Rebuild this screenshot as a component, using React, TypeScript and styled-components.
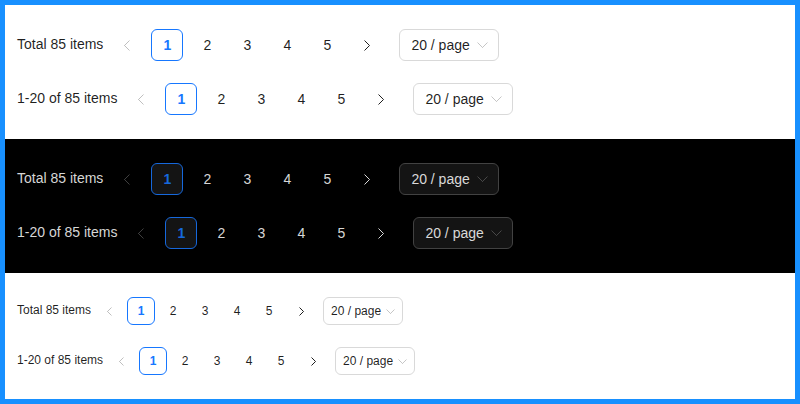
import React from "react";
import styled, { createGlobalStyle, css } from "styled-components";

type Size = "default" | "small";

const GlobalStyle = createGlobalStyle`
  html, body {
    margin: 0;
    padding: 0;
    background: #fff;
  }
  * {
    box-sizing: border-box;
  }
`;

const Frame = styled.div`
  width: 800px;
  height: 404px;
  border: 5px solid #1890ff;
  display: flex;
  flex-direction: column;
  font-family: "Liberation Sans", Arial, sans-serif;
`;

const Section = styled.div<{ $dark?: boolean; $size: Size }>`
  display: flex;
  flex-direction: column;
  gap: 22px;
  padding: 24px 12px;
  background: ${(p) => (p.$dark ? "#000" : "#fff")};
  color: ${(p) => (p.$dark ? "rgba(255,255,255,0.85)" : "rgba(0,0,0,0.88)")};
  font-size: ${(p) => (p.$size === "small" ? "12px" : "14px")};
  --item: ${(p) => (p.$size === "small" ? "28px" : "32px")};
  --gap: ${(p) => (p.$size === "small" ? "4px" : "8px")};
  --muted: ${(p) => (p.$dark ? "rgba(255,255,255,0.25)" : "rgba(0,0,0,0.25)")};
  --field: ${(p) => (p.$dark ? "#141414" : "#fff")};
  --line: ${(p) => (p.$dark ? "#424242" : "#d9d9d9")};
  --primary: ${(p) => (p.$dark ? "#1668dc" : "#1677ff")};
`;

const Row = styled.ul`
  display: flex;
  align-items: center;
  list-style: none;
  margin: 0;
  padding: 0;
  height: var(--item);
`;

const Total = styled.li`
  margin-right: var(--gap);
  padding-bottom: 2px;
  white-space: nowrap;
`;

const Item = styled.li<{ $active?: boolean }>`
  width: var(--item);
  height: var(--item);
  margin-right: var(--gap);
  display: flex;
  align-items: center;
  justify-content: center;
  border-radius: 6px;
  border: 1px solid transparent;
  ${(p) =>
    p.$active &&
    css`
      border-color: var(--primary);
      background: var(--field);
      color: var(--primary);
      font-weight: 600;
    `}
`;

const Arrow = styled.li<{ $disabled?: boolean }>`
  width: var(--item);
  height: var(--item);
  margin-right: var(--gap);
  display: flex;
  align-items: center;
  justify-content: center;
  color: ${(p) => (p.$disabled ? "var(--muted)" : "inherit")};
`;

const Select = styled.li<{ $size: Size }>`
  margin-left: var(--gap);
  height: var(--item);
  width: ${(p) => (p.$size === "small" ? "80px" : "100px")};
  padding: 0 ${(p) => (p.$size === "small" ? "7px" : "10px")} 0
    ${(p) => (p.$size === "small" ? "7px" : "11px")};
  border: 1px solid var(--line);
  border-radius: 6px;
  background: var(--field);
  display: flex;
  align-items: center;
  justify-content: space-between;
  white-space: nowrap;

  svg {
    color: var(--muted);
  }
`;

const Chevron = ({ dir, size }: { dir: "left" | "right"; size: Size }) => {
  const h = size === "small" ? 9 : 11;
  const w = size === "small" ? 5 : 6;
  const pts =
    dir === "left"
      ? `${w - 0.5},0.5 0.5,${h / 2} ${w - 0.5},${h - 0.5}`
      : `0.5,0.5 ${w - 0.5},${h / 2} 0.5,${h - 0.5}`;
  return (
    <svg width={w} height={h} viewBox={`0 0 ${w} ${h}`}>
      <polyline points={pts} fill="none" stroke="currentColor" strokeWidth="1" />
    </svg>
  );
};

const Down = ({ size }: { size: Size }) => {
  const w = size === "small" ? 9 : 11;
  const h = size === "small" ? 5 : 6;
  return (
    <svg width={w} height={h} viewBox={`0 0 ${w} ${h}`}>
      <polyline
        points={`0.5,0.5 ${w / 2},${h - 0.5} ${w - 0.5},0.5`}
        fill="none"
        stroke="currentColor"
        strokeWidth="0.9"
      />
    </svg>
  );
};

const Pager = ({ total, size }: { total: string; size: Size }) => (
  <Row>
    <Total>{total}</Total>
    <Arrow $disabled>
      <Chevron dir="left" size={size} />
    </Arrow>
    {[1, 2, 3, 4, 5].map((n) => (
      <Item key={n} $active={n === 1}>
        {n}
      </Item>
    ))}
    <Arrow>
      <Chevron dir="right" size={size} />
    </Arrow>
    <Select $size={size}>
      <span>20 / page</span>
      <Down size={size} />
    </Select>
  </Row>
);

const Block = ({ dark, size }: { dark?: boolean; size: Size }) => (
  <Section $dark={dark} $size={size}>
    <Pager total="Total 85 items" size={size} />
    <Pager total="1-20 of 85 items" size={size} />
  </Section>
);

export default function App() {
  return (
    <>
      <GlobalStyle />
      <Frame>
        <Block size="default" />
        <Block dark size="default" />
        <Block size="small" />
      </Frame>
    </>
  );
}
